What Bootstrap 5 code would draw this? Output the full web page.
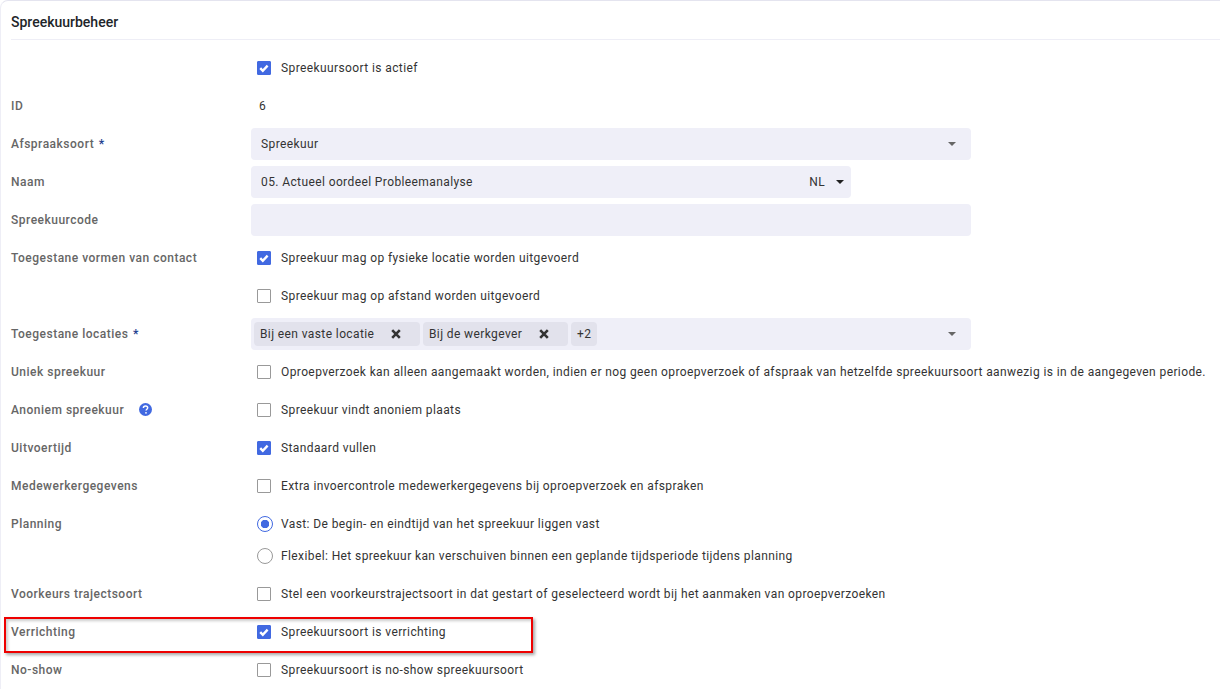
<!DOCTYPE html>
<html lang="nl">
<head>
<meta charset="utf-8">
<title>Spreekuurbeheer</title>
<link href="https://cdn.jsdelivr.net/npm/bootstrap@5.3.0/dist/css/bootstrap.min.css" rel="stylesheet">
<style>
html, body { height: 689px; overflow: hidden; }
body { font-family: Roboto, "Liberation Sans", sans-serif; font-size: 12px; letter-spacing: .395px; color: #333; background: #fff; position: relative; }
.sheet { border-top: 1px solid #e4e4ef; border-left: 1px solid #eeeef6; border-top-left-radius: 8px; height: 689px; }
.sheet-head { margin-left: 10px; height: 39px; border-bottom: 1px solid #eeeef6; font-size: 14px; font-weight: 500; letter-spacing: 0; color: #212529; line-height: 42px; }
.sheet-body { padding: 12px 0 0 10px; }
.frow { min-height: 32px; margin-bottom: 6px; }
.frow.tight { margin-bottom: 0; }
.flabel { width: 240px; flex: none; color: #666; font-weight: 500; letter-spacing: .5px; }
.flabel b { color: #1f3f8f; font-weight: 700; margin-left: 1px; }
.fctl { flex: 1 1 auto; min-width: 0; white-space: nowrap; }
.checkline { padding-left: 6px; gap: 10px; min-height: 32px; }
.checkline .form-check-input { width: 14px; height: 14px; margin: 0; border-radius: 1px; border-color: #999; flex: none; }
.checkline .form-check-input[type=checkbox]:checked { background-color: #4169e1; border-color: #4169e1; background-size: 100% 100%; background-image: url("data:image/svg+xml,%3csvg xmlns='http://www.w3.org/2000/svg' viewBox='0 0 14 14'%3e%3cpath fill='none' stroke='%23fff' stroke-width='2.8' d='M2.6 7.2l3 3 5.6-6'/%3e%3c/svg%3e"); }
.checkline .form-check-input[type=radio] { width: 16px; height: 16px; margin-right: -2px; border-radius: 50%; }
.checkline .form-check-input[type=radio]:checked { background-color: #fff; border-color: #4169e1; background-image: radial-gradient(circle, #4169e1 0 4px, transparent 4.5px); }
.checkline .form-check-label { color: #333; }
.plain { padding-left: 8px; line-height: 32px; }
.fbox { width: 720px; height: 32px; background: #efeff8; border-radius: 4px; padding-left: 10px; padding-right: 15px; color: #333; }
.fbox.narrow { width: 600px; padding-right: 7px; }
.caret { width: 0; height: 0; border-left: 4.5px solid transparent; border-right: 4.5px solid transparent; border-top: 4.5px solid #666; flex: none; }
.caret.dark { border-top-color: #222; margin-left: 10px; }
.lang { letter-spacing: .4px; margin-right: 1px; }
.tagbox { padding-left: 3px; gap: 3px; }
.tagpill { background: #e2e2ec; border-radius: 4px; height: 24px; padding: 0 6px; }
.tagtext-a { width: 131px; }
.tagtext-b { width: 110px; }
.tagx { width: 10px; height: 10px; flex: none; margin-right: 13px; }
.qmark { width: 13px; height: 13px; margin-left: 15px; vertical-align: -2px; }
.redbox { position: absolute; left: 4px; top: 617px; width: 529px; height: 36px; border: 2px solid #ee0000; box-shadow: 2px 2px 3px rgba(0,0,0,.35), inset 2px 2px 3px rgba(0,0,0,.2); pointer-events: none; }
</style>
</head>
<body>
<div class="sheet">
  <div class="sheet-head">Spreekuurbeheer</div>
  <form class="sheet-body">
    <div class="frow d-flex align-items-center">
      <div class="flabel"></div>
      <div class="fctl d-flex align-items-center checkline"><input class="form-check-input" type="checkbox" checked><label class="form-check-label">Spreekuursoort is actief</label></div>
    </div>
    <div class="frow d-flex align-items-center">
      <div class="flabel">ID</div>
      <div class="fctl plain">6</div>
    </div>
    <div class="frow d-flex align-items-center">
      <div class="flabel">Afspraaksoort <b>*</b></div>
      <div class="fctl"><div class="fbox d-flex align-items-center justify-content-between"><span>Spreekuur</span><span class="caret"></span></div></div>
    </div>
    <div class="frow d-flex align-items-center">
      <div class="flabel">Naam</div>
      <div class="fctl"><div class="fbox narrow d-flex align-items-center"><span class="flex-grow-1">05. Actueel oordeel Probleemanalyse</span><span class="lang">NL</span><span class="caret dark"></span></div></div>
    </div>
    <div class="frow d-flex align-items-center">
      <div class="flabel">Spreekuurcode</div>
      <div class="fctl"><div class="fbox"></div></div>
    </div>
    <div class="frow d-flex align-items-center">
      <div class="flabel">Toegestane vormen van contact</div>
      <div class="fctl d-flex align-items-center checkline"><input class="form-check-input" type="checkbox" checked><label class="form-check-label">Spreekuur mag op fysieke locatie worden uitgevoerd</label></div>
    </div>
    <div class="frow d-flex align-items-center">
      <div class="flabel"></div>
      <div class="fctl d-flex align-items-center checkline"><input class="form-check-input" type="checkbox"><label class="form-check-label">Spreekuur mag op afstand worden uitgevoerd</label></div>
    </div>
    <div class="frow d-flex align-items-center">
      <div class="flabel">Toegestane locaties <b>*</b></div>
      <div class="fctl"><div class="fbox tagbox d-flex align-items-center">
        <span class="tagpill d-flex align-items-center"><span class="tagtext-a">Bij een vaste locatie</span><svg class="tagx" viewBox="0 0 10 10"><path d="M1.2 1.2l7.6 7.6M8.8 1.2l-7.6 7.6" stroke="#333" stroke-width="2.6" fill="none"/></svg></span>
        <span class="tagpill d-flex align-items-center"><span class="tagtext-b">Bij de werkgever</span><svg class="tagx" viewBox="0 0 10 10"><path d="M1.2 1.2l7.6 7.6M8.8 1.2l-7.6 7.6" stroke="#333" stroke-width="2.6" fill="none"/></svg></span>
        <span class="tagpill d-flex align-items-center">+2</span>
        <span class="flex-grow-1"></span><span class="caret"></span>
      </div></div>
    </div>
    <div class="frow d-flex align-items-center">
      <div class="flabel">Uniek spreekuur</div>
      <div class="fctl d-flex align-items-center checkline"><input class="form-check-input" type="checkbox"><label class="form-check-label">Oproepverzoek kan alleen aangemaakt worden, indien er nog geen oproepverzoek of afspraak van hetzelfde spreekuursoort aanwezig is in de aangegeven periode.</label></div>
    </div>
    <div class="frow d-flex align-items-center">
      <div class="flabel">Anoniem spreekuur<svg class="qmark" viewBox="0 0 16 16"><circle cx="8" cy="8" r="8" fill="#4169e1"/><path d="M5.4 6.2c0-1.6 1.2-2.5 2.7-2.5s2.6.9 2.6 2.2c0 1.8-2 1.8-2 3.4" stroke="#fff" stroke-width="1.8" fill="none"/><circle cx="8.6" cy="12.1" r="1.1" fill="#fff"/></svg></div>
      <div class="fctl d-flex align-items-center checkline"><input class="form-check-input" type="checkbox"><label class="form-check-label">Spreekuur vindt anoniem plaats</label></div>
    </div>
    <div class="frow d-flex align-items-center">
      <div class="flabel">Uitvoertijd</div>
      <div class="fctl d-flex align-items-center checkline"><input class="form-check-input" type="checkbox" checked><label class="form-check-label">Standaard vullen</label></div>
    </div>
    <div class="frow d-flex align-items-center">
      <div class="flabel">Medewerkergegevens</div>
      <div class="fctl d-flex align-items-center checkline"><input class="form-check-input" type="checkbox"><label class="form-check-label">Extra invoercontrole medewerkergegevens bij oproepverzoek en afspraken</label></div>
    </div>
    <div class="frow tight d-flex align-items-center">
      <div class="flabel">Planning</div>
      <div class="fctl d-flex align-items-center checkline"><input class="form-check-input" type="radio" name="pl" checked><label class="form-check-label">Vast: De begin- en eindtijd van het spreekuur liggen vast</label></div>
    </div>
    <div class="frow d-flex align-items-center">
      <div class="flabel"></div>
      <div class="fctl d-flex align-items-center checkline"><input class="form-check-input" type="radio" name="pl"><label class="form-check-label">Flexibel: Het spreekuur kan verschuiven binnen een geplande tijdsperiode tijdens planning</label></div>
    </div>
    <div class="frow d-flex align-items-center">
      <div class="flabel">Voorkeurs trajectsoort</div>
      <div class="fctl d-flex align-items-center checkline"><input class="form-check-input" type="checkbox"><label class="form-check-label">Stel een voorkeurstrajectsoort in dat gestart of geselecteerd wordt bij het aanmaken van oproepverzoeken</label></div>
    </div>
    <div class="frow d-flex align-items-center">
      <div class="flabel">Verrichting</div>
      <div class="fctl d-flex align-items-center checkline"><input class="form-check-input" type="checkbox" checked><label class="form-check-label">Spreekuursoort is verrichting</label></div>
    </div>
    <div class="frow d-flex align-items-center">
      <div class="flabel">No-show</div>
      <div class="fctl d-flex align-items-center checkline"><input class="form-check-input" type="checkbox"><label class="form-check-label">Spreekuursoort is no-show spreekuursoort</label></div>
    </div>
  </form>
</div>
<div class="redbox"></div>
<script src="https://cdn.jsdelivr.net/npm/bootstrap@5.3.0/dist/js/bootstrap.bundle.min.js"></script>
</body>
</html>
